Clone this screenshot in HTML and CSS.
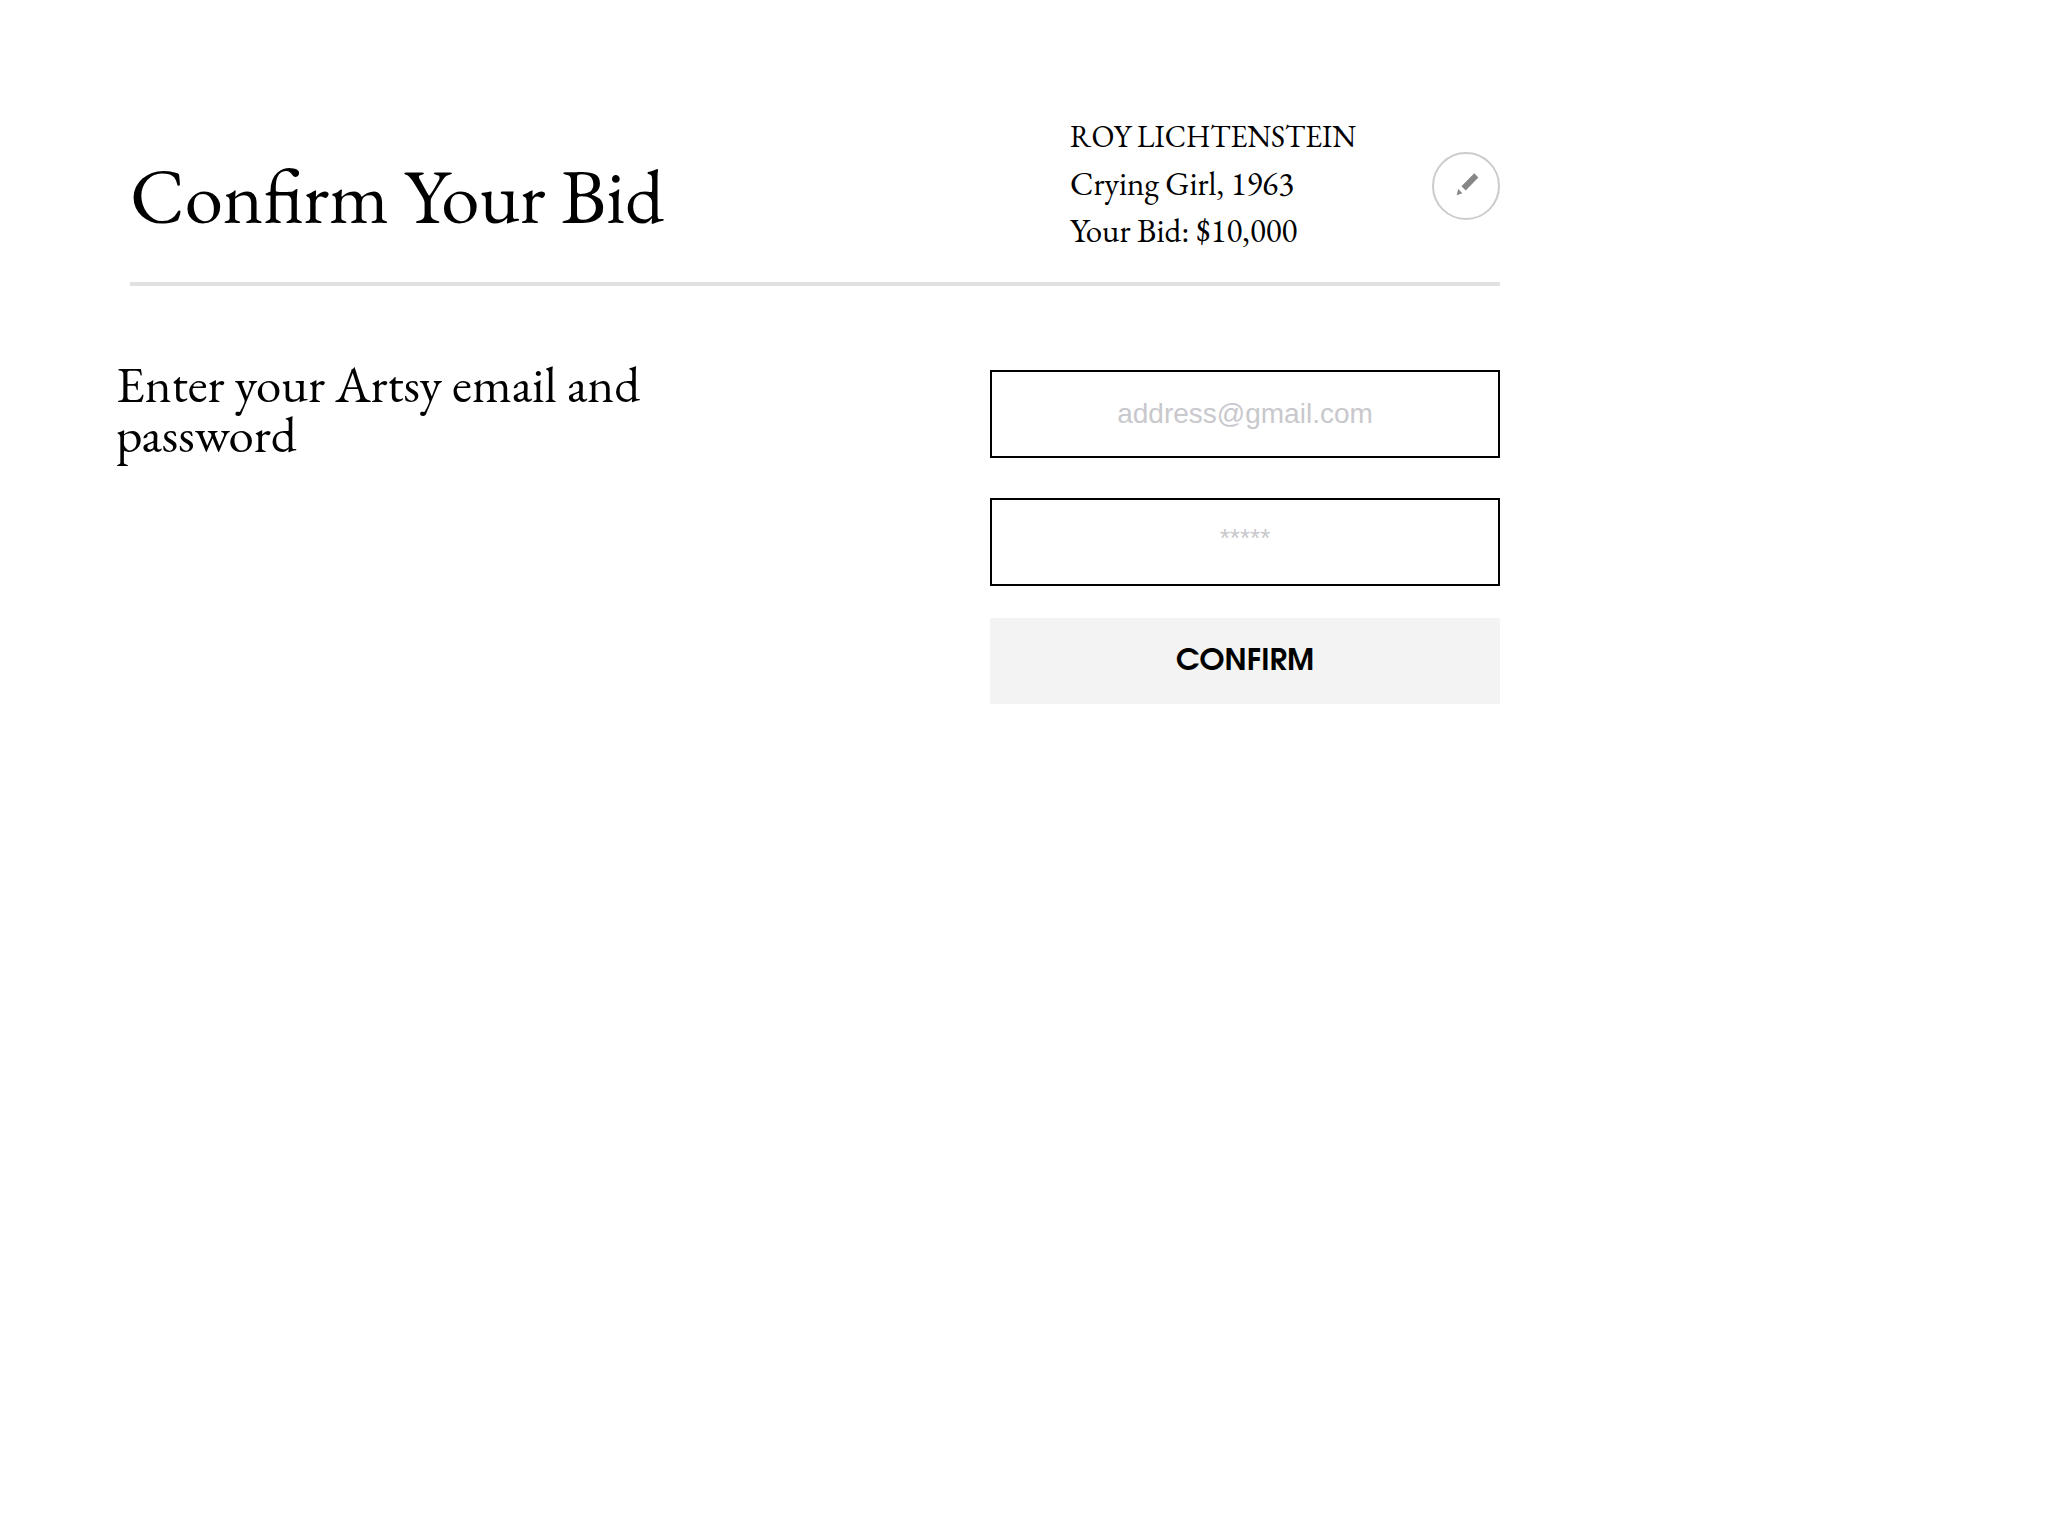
FILE: index.html
```html
<!DOCTYPE html>
<html lang="en">
<head>
  <meta charset="utf-8">
  <meta name="viewport" content="width=device-width, initial-scale=1">
  <title>Confirm Your Bid</title>
  <link rel="stylesheet" href="styles.css">
</head>
<body>
  <main class="page">
    <header class="page-header">
      <h1 class="page-title">Confirm Your Bid</h1>
      <div class="lot">
        <p class="lot-line lot-artist">ROY LICHTENSTEIN</p>
        <p class="lot-line">Crying Girl, 1963</p>
        <p class="lot-line">Your Bid: $10,000</p>
      </div>
      <button class="edit-button" type="button" aria-label="Edit bid">
        <svg class="edit-icon" viewBox="0 0 28 28" aria-hidden="true">
          <path d="M22.3 1.3 L26.4 5.6 L13.7 18.4 L9.4 14.2 Z M6.2 17 L10.4 21.2 L4.6 23.2 Z"/>
        </svg>
      </button>
    </header>

    <section class="login">
      <h2 class="login-title">Enter your Artsy email and password</h2>
      <form class="login-form">
        <input class="field" type="email" placeholder="address@gmail.com" aria-label="Email">
        <input class="field field-password" type="password" placeholder="*****" aria-label="Password">
        <button class="confirm-button" type="submit">CONFIRM</button>
      </form>
    </section>
  </main>
</body>
</html>
```

FILE: styles.css
```css
* {
  box-sizing: border-box;
}

body {
  margin: 0;
  background: #fff;
  color: #000;
  font-family: "EB Garamond", "Liberation Serif", serif;
}

.page {
  max-width: 1500px;
  padding: 113px 0 60px 116px;
}

.page-header {
  display: grid;
  grid-template-columns: 1fr 362px 68px;
  align-items: end;
  margin-left: 14px;
  padding-bottom: 28px;
  border-bottom: 4px solid #e1e1e1;
}

.page-title {
  margin: 0 0 18px;
  font-size: 77px;
  font-weight: 400;
  line-height: 80px;
}

.lot-line {
  margin: 0;
  font-size: 33px;
  line-height: 47px;
}

.lot-artist {
  font-size: 30px;
}

.edit-button {
  display: grid;
  place-items: center;
  width: 68px;
  height: 68px;
  margin-bottom: 34px;
  padding: 0;
  border: 2px solid #ccc;
  border-radius: 50%;
  background: #fff;
  cursor: pointer;
}

.edit-icon {
  width: 28px;
  height: 28px;
  fill: #878787;
}

.login {
  display: flex;
  justify-content: space-between;
  align-items: flex-start;
  gap: 40px;
  padding-top: 73px;
}

.login-title {
  max-width: 560px;
  margin: 0;
  font-size: 51px;
  font-weight: 400;
  line-height: 50px;
}

.login-form {
  display: flex;
  flex: 0 1 510px;
  flex-direction: column;
  padding-top: 11px;
}

.field {
  width: 100%;
  height: 88px;
  margin: 0 0 40px;
  padding: 0 20px;
  border: 2px solid #000;
  border-radius: 0;
  background: #fff;
  font-family: "Liberation Sans", sans-serif;
  font-size: 28px;
  text-align: center;
}

.field-password {
  margin-bottom: 32px;
  padding-bottom: 8px;
  font-size: 26px;
}

.field::placeholder {
  color: #c8c8cd;
  opacity: 1;
}

.confirm-button {
  height: 86px;
  padding: 2px 0 0;
  border: 0;
  background: #f3f3f3;
  color: #000;
  font-family: "ITC Avant Garde Gothic", "URW Gothic", "TeX Gyre Adventor", Lato, sans-serif;
  font-size: 30px;
  font-weight: 700;
  cursor: pointer;
}
```
